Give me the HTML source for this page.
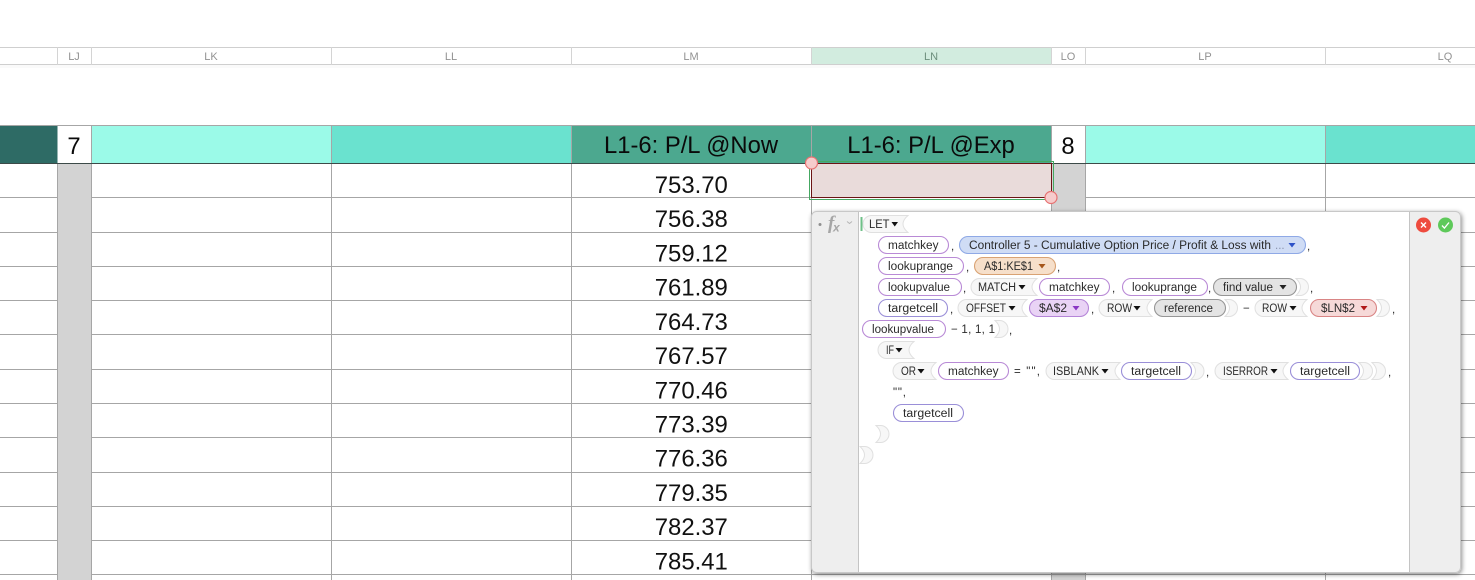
<!DOCTYPE html>
<html><head><meta charset="utf-8"><title>Spreadsheet formula editor</title>
<style>
html,body{margin:0;padding:0;background:#fff;width:1475px;height:580px;overflow:hidden}
svg{display:block;position:absolute;left:0;top:0}
text{font-family:"Liberation Sans",Arial,sans-serif}
.h{font-size:11px;fill:#929292;text-anchor:middle}
.v{font-size:23.9px;fill:#111;text-anchor:middle}
.b{font-size:23.8px;fill:#0a0a0a;text-anchor:middle}
.t{font-size:11.5px;fill:#2a2a2a}
.p{stroke-width:1.1}
.n{fill:#fff;stroke:#b98ad6;stroke-width:1.1}
.k{fill:#fff;stroke:#9a8fd8;stroke-width:1.1}
.f{fill:#f7f7f7;stroke:#e0e0e0;stroke-width:1}
.g{fill:#e4e4e4;stroke:#969696;stroke-width:1.1}
</style></head><body>
<svg width="1475" height="580" viewBox="0 0 1475 580" xmlns="http://www.w3.org/2000/svg">
<rect width="1475" height="580" fill="#fff"/>
<!-- column header -->
<rect x="811.5" y="47" width="240" height="18" fill="#d2ecdf"/>
<path d="M0 47.5H1475M0 64.5H1475" stroke="#cfcfcf" fill="none"/>
<path d="M57.5 47V65M91.5 47V65M331.5 47V65M571.5 47V65M811.5 47V65M1051.5 47V65M1085.5 47V65M1325.5 47V65" stroke="#d4d4d4" fill="none"/>
<text class="h" x="74" y="60">LJ</text><text class="h" x="211" y="60">LK</text><text class="h" x="451" y="60">LL</text><text class="h" x="691" y="60">LM</text><text class="h" x="931" y="60" style="fill:#6d8f7d">LN</text><text class="h" x="1068" y="60">LO</text><text class="h" x="1205" y="60">LP</text><text class="h" x="1445" y="60">LQ</text>
<rect x="0" y="65" width="1475" height="3" fill="#fafafa"/>
<!-- band -->
<rect x="0" y="125" width="57.5" height="38" fill="#2e6b65"/>
<rect x="91.5" y="125" width="240" height="38" fill="#9bfae8"/>
<rect x="331.5" y="125" width="240" height="38" fill="#6ae2cf"/>
<rect x="571.5" y="125" width="480" height="38" fill="#4ca88f"/>
<rect x="1085.5" y="125" width="240" height="38" fill="#9bfae8"/>
<rect x="1325.5" y="125" width="150" height="38" fill="#6ae2cf"/>
<!-- gray columns -->
<rect x="58" y="163" width="33" height="417" fill="#d3d3d3"/>
<rect x="1052" y="163" width="33" height="417" fill="#d3d3d3"/>
<!-- grid -->
<path d="M0 197.5H58M91 197.5H1052M1085 197.5H1475M0 232.5H58M91 232.5H1052M1085 232.5H1475M0 266.5H58M91 266.5H1475M0 300.5H58M91 300.5H1475M0 334.5H58M91 334.5H1475M0 369.5H58M91 369.5H1475M0 403.5H58M91 403.5H1475M0 437.5H58M91 437.5H1475M0 472.5H58M91 472.5H1475M0 506.5H58M91 506.5H1475M0 540.5H58M91 540.5H1475M0 574.5H58M91 574.5H1475" stroke="#a6a6a6" fill="none"/>
<path d="M57.5 163V580M91.5 125V580M331.5 125V580M571.5 125V580M811.5 125V580M1051.5 125V580M1085.5 125V580M1325.5 125V580" stroke="#a6a6a6" fill="none"/>
<path d="M0 125.5H1475" stroke="#a6a6a6" fill="none"/>
<path d="M0 163.5H1475" stroke="#3c4a48" fill="none"/>
<text class="b" x="74" y="154">7</text>
<text class="b" x="691" y="153">L1-6: P/L @Now</text>
<text class="b" x="931" y="153">L1-6: P/L @Exp</text>
<text class="b" x="1068" y="154">8</text>
<text class="v" x="691.3" y="193">753.70</text>
<text class="v" x="691.3" y="227">756.38</text>
<text class="v" x="691.3" y="261.5">759.12</text>
<text class="v" x="691.3" y="295.5">761.89</text>
<text class="v" x="691.3" y="330">764.73</text>
<text class="v" x="691.3" y="364">767.57</text>
<text class="v" x="691.3" y="398.5">770.46</text>
<text class="v" x="691.3" y="432.5">773.39</text>
<text class="v" x="691.3" y="466.5">776.36</text>
<text class="v" x="691.3" y="501">779.35</text>
<text class="v" x="691.3" y="535">782.37</text>
<text class="v" x="691.3" y="569.5">785.41</text>
<!-- selection -->
<rect x="809.5" y="161.5" width="244" height="38" fill="none" stroke="#45a862" stroke-width="1"/>
<rect x="811.5" y="163.5" width="240" height="34" fill="#e9dbda" stroke="#6b1414" stroke-width="1"/>
<circle cx="811.5" cy="163" r="6" fill="#f6cccc" stroke="#e77272" stroke-width="1.2"/>
<circle cx="1051" cy="197.5" r="6" fill="#f6cccc" stroke="#e77272" stroke-width="1.2"/>
<!-- panel -->
<defs><filter id="s" x="-5%" y="-5%" width="110%" height="112%"><feDropShadow dx="1" dy="1.5" stdDeviation="2.5" flood-color="#000" flood-opacity=".45"/></filter></defs>
<rect x="811.5" y="211.5" width="649" height="361" rx="5" fill="#eeeeee" stroke="#c8c8c8" filter="url(#s)"/>
<rect x="859" y="212" width="550" height="360" fill="#fff"/>
<path d="M858.5 212V572M1409.5 212V572" stroke="#c4c4c4" fill="none"/>
<circle cx="820" cy="224.5" r="1.5" fill="#8f8f8f"/>
<text x="828" y="229" style="font-family:'Liberation Serif',serif;font-size:19px;font-style:italic;font-weight:bold;fill:#a6a6a6">f</text>
<text x="833" y="231.5" style="font-family:'Liberation Sans',sans-serif;font-size:12px;font-style:italic;font-weight:bold;fill:#a6a6a6">x</text>
<path d="M847 221.5l2.5 2 2.5-2" stroke="#b5b5b5" fill="none"/>
<rect x="860.5" y="217" width="2" height="14" fill="#6fc088"/>
<circle cx="1423.5" cy="225" r="7.5" fill="#ee4b3e"/>
<path d="M1421 222.5l5 5M1426 222.5l-5 5" stroke="#fff" stroke-width="1.4"/>
<circle cx="1445.5" cy="225" r="7.5" fill="#5ec95a"/>
<path d="M1442 225.5l2.4 2.6 4.6-5.6" stroke="#fff" stroke-width="1.3" fill="none"/>

<!-- line 1 -->
<path class="f" d="M908 215.5H871.5A8.5 8.5 0 0 0 871.5 232.5H908Q898 224 908 215.5Z"/>
<text class="t" x="869" y="228" textLength="20.5" lengthAdjust="spacingAndGlyphs">LET</text><path d="M891.5 222h6.5l-3.25 4.5z" fill="#111"/>
<!-- line 2 -->
<rect class="n" x="878.5" y="236.5" width="70" height="17" rx="8.5"/><text class="t" x="888" y="249" textLength="50.5" lengthAdjust="spacingAndGlyphs">matchkey</text>
<text class="t" x="951" y="250">,</text>
<rect class="p" x="959.5" y="236.5" width="346" height="17" rx="8.5" fill="#cfdcf5" stroke="#8fa9e6"/>
<text class="t" x="969" y="249" textLength="302" lengthAdjust="spacingAndGlyphs">Controller 5 - Cumulative Option Price / Profit &amp; Loss with</text>
<text class="t" x="1275" y="249" style="fill:#8a94ad">...</text><path d="M1288.5 243h7l-3.5 4.5z" fill="#2d52c8"/>
<text class="t" x="1307" y="250">,</text>
<!-- line 3 -->
<rect class="n" x="878.5" y="257.5" width="85" height="17" rx="8.5"/><text class="t" x="888" y="270" textLength="65" lengthAdjust="spacingAndGlyphs">lookuprange</text>
<text class="t" x="966" y="271">,</text>
<rect class="p" x="974.5" y="257.5" width="81" height="17" rx="8.5" fill="#f6dfca" stroke="#d9a273"/>
<text class="t" x="984" y="270" textLength="49" lengthAdjust="spacingAndGlyphs">A$1:KE$1</text><path d="M1038.5 264h7l-3.5 4.5z" fill="#a5561b"/>
<text class="t" x="1057" y="271">,</text>
<!-- line 4 -->
<rect class="n" x="878.5" y="278.5" width="83" height="17" rx="8.5"/><text class="t" x="888" y="291" textLength="62" lengthAdjust="spacingAndGlyphs">lookupvalue</text>
<text class="t" x="963" y="292">,</text>
<path class="f" d="M1037 278.5H979.5A8.5 8.5 0 0 0 979.5 295.5H1037Q1027 287 1037 278.5Z"/>
<text class="t" x="978" y="291" textLength="38" lengthAdjust="spacingAndGlyphs">MATCH</text><path d="M1018.5 285h7l-3.5 4.5z" fill="#111"/>
<rect class="n" x="1039.5" y="278.5" width="70" height="17" rx="8.5"/><text class="t" x="1049" y="291" textLength="50.5" lengthAdjust="spacingAndGlyphs">matchkey</text>
<text class="t" x="1112" y="292">,</text>
<rect class="n" x="1122.5" y="278.5" width="85" height="17" rx="8.5"/><text class="t" x="1132" y="291" textLength="65" lengthAdjust="spacingAndGlyphs">lookuprange</text>
<text class="t" x="1208" y="292">,</text>
<path class="f" d="M1296 278.5H1300A8.5 8.5 0 0 1 1300 295.5H1296Q1305 287 1296 278.5Z"/>
<rect class="g" x="1213.5" y="278.5" width="83" height="17" rx="8.5"/><text class="t" x="1223" y="291" textLength="50" lengthAdjust="spacingAndGlyphs">find value</text><path d="M1279.5 285h7l-3.5 4.5z" fill="#222"/>
<text class="t" x="1310" y="292">,</text>
<!-- line 5 -->
<rect class="k" x="878.5" y="299.5" width="69" height="17" rx="8.5"/><text class="t" x="888" y="312" textLength="50" lengthAdjust="spacingAndGlyphs">targetcell</text>
<text class="t" x="950" y="313">,</text>
<path class="f" d="M1027 299.5H966.5A8.5 8.5 0 0 0 966.5 316.5H1027Q1017 308 1027 299.5Z"/>
<text class="t" x="966" y="312" textLength="40" lengthAdjust="spacingAndGlyphs">OFFSET</text><path d="M1008.5 306h7l-3.5 4.5z" fill="#111"/>
<rect class="p" x="1029.5" y="299.5" width="59" height="17" rx="8.5" fill="#e9d3f5" stroke="#b585d8"/>
<text class="t" x="1039" y="312" textLength="28" lengthAdjust="spacingAndGlyphs">$A$2</text><path d="M1072.5 306h7l-3.5 4.5z" fill="#8a37c4"/>
<text class="t" x="1091" y="313">,</text>
<path class="f" d="M1152 299.5H1107.5A8.5 8.5 0 0 0 1107.5 316.5H1152Q1142 308 1152 299.5Z"/>
<text class="t" x="1107" y="312" textLength="25" lengthAdjust="spacingAndGlyphs">ROW</text><path d="M1133.5 306h7l-3.5 4.5z" fill="#111"/>
<path class="f" d="M1225 299.5H1229A8.5 8.5 0 0 1 1229 316.5H1225Q1234 308 1225 299.5Z"/>
<rect class="g" x="1154.5" y="299.5" width="71" height="17" rx="8.5"/><text class="t" x="1164" y="312" textLength="49" lengthAdjust="spacingAndGlyphs">reference</text>
<text class="t" x="1243" y="312">−</text>
<path class="f" d="M1307 299.5H1263.5A8.5 8.5 0 0 0 1263.5 316.5H1307Q1297 308 1307 299.5Z"/>
<text class="t" x="1262" y="312" textLength="25" lengthAdjust="spacingAndGlyphs">ROW</text><path d="M1289.5 306h7l-3.5 4.5z" fill="#111"/>
<path class="f" d="M1377 299.5H1381A8.5 8.5 0 0 1 1381 316.5H1377Q1386 308 1377 299.5Z"/>
<rect class="p" x="1310.5" y="299.5" width="66" height="17" rx="8.5" fill="#f6d9d8" stroke="#d98585"/>
<text class="t" x="1321" y="312" textLength="34" lengthAdjust="spacingAndGlyphs">$LN$2</text><path d="M1360.5 306h7l-3.5 4.5z" fill="#b01818"/>
<text class="t" x="1392" y="313">,</text>
<!-- line 6 -->
<rect class="n" x="862.5" y="320.5" width="83" height="17" rx="8.5"/><text class="t" x="872" y="333" textLength="62" lengthAdjust="spacingAndGlyphs">lookupvalue</text>
<text class="t" x="951" y="333" textLength="44">− 1, 1, 1</text>
<path class="f" d="M995 320.5H999.5A8.5 8.5 0 0 1 999.5 337.5H995Q1004 329 995 320.5Z"/>
<text class="t" x="1009" y="334">,</text>
<!-- line 7 -->
<path class="f" d="M914 341.5H886.5A8.5 8.5 0 0 0 886.5 358.5H914Q904 350 914 341.5Z"/>
<text class="t" x="886" y="354" textLength="8" lengthAdjust="spacingAndGlyphs">IF</text><path d="M895.5 348h7l-3.5 4.5z" fill="#111"/>
<!-- line 8 -->
<path class="f" d="M936 362.5H901.5A8.5 8.5 0 0 0 901.5 379.5H936Q926 371 936 362.5Z"/>
<text class="t" x="901" y="375" textLength="15" lengthAdjust="spacingAndGlyphs">OR</text><path d="M917.5 369h7l-3.5 4.5z" fill="#111"/>
<rect class="n" x="938.5" y="362.5" width="70" height="17" rx="8.5"/><text class="t" x="948" y="375" textLength="50.5" lengthAdjust="spacingAndGlyphs">matchkey</text>
<text class="t" x="1014" y="375" textLength="26">= "",</text>
<path class="f" d="M1120 362.5H1054.5A8.5 8.5 0 0 0 1054.5 379.5H1120Q1110 371 1120 362.5Z"/>
<text class="t" x="1053" y="375" textLength="46" lengthAdjust="spacingAndGlyphs">ISBLANK</text><path d="M1101.5 369h7l-3.5 4.5z" fill="#111"/>
<path class="f" d="M1191 362.5H1195.5A8.5 8.5 0 0 1 1195.5 379.5H1191Q1200 371 1191 362.5Z"/>
<rect class="k" x="1121.5" y="362.5" width="70" height="17" rx="8.5"/><text class="t" x="1131" y="375" textLength="50" lengthAdjust="spacingAndGlyphs">targetcell</text>
<text class="t" x="1206" y="376">,</text>
<path class="f" d="M1288 362.5H1223.5A8.5 8.5 0 0 0 1223.5 379.5H1288Q1278 371 1288 362.5Z"/>
<text class="t" x="1223" y="375" textLength="45" lengthAdjust="spacingAndGlyphs">ISERROR</text><path d="M1270.5 369h7l-3.5 4.5z" fill="#111"/>
<path class="f" d="M1372 362.5H1377A8.5 8.5 0 0 1 1377 379.5H1372Q1381 371 1372 362.5Z"/>
<path class="f" d="M1359 362.5H1364A8.5 8.5 0 0 1 1364 379.5H1359Q1368 371 1359 362.5Z"/>
<rect class="k" x="1290.5" y="362.5" width="69" height="17" rx="8.5"/><text class="t" x="1300" y="375" textLength="50" lengthAdjust="spacingAndGlyphs">targetcell</text>
<text class="t" x="1388" y="376">,</text>
<!-- line 9 -->
<text class="t" x="893" y="396" textLength="13">"",</text>
<!-- line 10 -->
<rect class="k" x="893.5" y="404.5" width="70" height="17" rx="8.5"/><text class="t" x="903" y="417" textLength="50" lengthAdjust="spacingAndGlyphs">targetcell</text>
<!-- line 11/12 -->
<path class="f" d="M876 425.5H880.5A8.5 8.5 0 0 1 880.5 442.5H876Q885 434 876 425.5Z"/>
<path class="f" d="M860 446.5H864.5A8.5 8.5 0 0 1 864.5 463.5H860Q869 455 860 446.5Z"/>
</svg>
</body></html>
